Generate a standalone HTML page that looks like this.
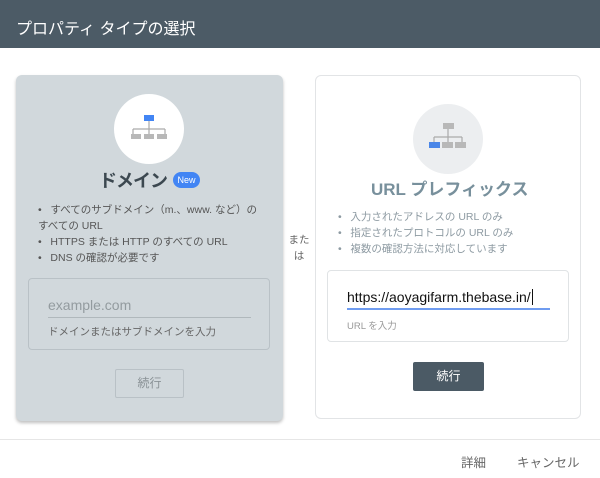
<!DOCTYPE html>
<html><head><meta charset="utf-8"><style>
*{margin:0;padding:0;box-sizing:border-box}
body{width:600px;height:478px;position:relative;background:#fff;font-family:"Liberation Sans","Noto Sans CJK JP",sans-serif;overflow:hidden}
.a{position:absolute;white-space:nowrap}
.hdr{position:absolute;left:0;top:0;width:600px;height:48px;background:#4c5b66;color:#fff;font-size:16px;padding:15px 0 0 16px}
.lc{position:absolute;left:16px;top:75px;width:267px;height:346px;background:#d1d8dc;border-radius:6px;box-shadow:0 2px 3px rgba(0,0,0,.25)}
.rc{position:absolute;left:315px;top:75px;width:266px;height:344px;background:#fff;border:1px solid #e2e4e6;border-radius:6px}
.li{font-size:10.5px;line-height:16px}
</style></head><body>
<div class="hdr">プロパティ タイプの選択</div>
<div class="lc"></div>
<div class="rc"></div>
<div class="a" style="left:114px;top:94px;width:70px;height:70px;border-radius:50%;background:#fff"></div>
<svg class="a" style="left:114px;top:94px" width="70" height="70">
<rect x="30" y="21" width="10" height="6" fill="#4285f4"/>
<path d="M35 27V35M19 35H51M19 35V40M35 35V40M51 35V40" stroke="#aaa" stroke-width="1.2" fill="none"/>
<rect x="17" y="40" width="10" height="5" fill="#b8b8b8"/><rect x="30" y="40" width="10" height="5" fill="#b8b8b8"/><rect x="43" y="40" width="10" height="5" fill="#b8b8b8"/>
</svg>
<div class="a" style="left:99px;top:167px;font-size:18px;letter-spacing:-1px;font-weight:bold;color:#3c4850">ドメイン</div>
<div class="a" style="left:173px;top:172px;width:27px;height:16px;border-radius:8px;background:#4285f4;color:#fff;font-size:9px;text-align:center;line-height:16px">New</div>
<div class="a li" style="left:38px;top:202px;color:#555">•&nbsp;&nbsp;&nbsp;すべてのサブドメイン（m.、www. など）の</div>
<div class="a li" style="left:38px;top:218px;color:#555">すべての URL</div>
<div class="a li" style="left:38px;top:234px;color:#555">•&nbsp;&nbsp;&nbsp;HTTPS または HTTP のすべての URL</div>
<div class="a li" style="left:38px;top:250px;color:#555">•&nbsp;&nbsp;&nbsp;DNS の確認が必要です</div>
<div class="a" style="left:28px;top:278px;width:242px;height:72px;border:1px solid #b9c1c6;border-radius:4px"></div>
<div class="a" style="left:48px;top:297px;font-size:14px;color:#939b9f">example.com</div>
<div class="a" style="left:48px;top:317px;width:203px;height:1px;background:#b0b8bc"></div>
<div class="a" style="left:48px;top:324px;font-size:10.5px;color:#666">ドメインまたはサブドメインを入力</div>
<div class="a" style="left:115px;top:369px;width:69px;height:29px;border:1px solid #b9c1c6;border-radius:2px;font-size:12px;color:#8a9296;text-align:center;line-height:27px">続行</div>
<div class="a" style="left:288px;top:232px;font-size:10.5px;color:#666;line-height:16px;width:22px;text-align:center;white-space:normal">また<br>は</div>
<div class="a" style="left:413px;top:104px;width:70px;height:70px;border-radius:50%;background:#eceef0"></div>
<svg class="a" style="left:413px;top:104px" width="70" height="70">
<rect x="30" y="19" width="11" height="6" fill="#b8b8b8"/>
<path d="M35 25V33M21 33H49M21 33V38M35 33V38M49 33V38" stroke="#aaa" stroke-width="1.2" fill="none"/>
<rect x="16" y="38" width="11" height="6" fill="#4a86e8"/><rect x="29" y="38" width="11" height="6" fill="#b8b8b8"/><rect x="42" y="38" width="11" height="6" fill="#b8b8b8"/>
</svg>
<div class="a" style="left:371px;top:175px;font-size:17px;font-weight:bold;color:#78909c">URL プレフィックス</div>
<div class="a li" style="left:338px;top:209px;color:#8d9aa2">•&nbsp;&nbsp;&nbsp;入力されたアドレスの URL のみ</div>
<div class="a li" style="left:338px;top:225px;color:#8d9aa2">•&nbsp;&nbsp;&nbsp;指定されたプロトコルの URL のみ</div>
<div class="a li" style="left:338px;top:241px;color:#8d9aa2">•&nbsp;&nbsp;&nbsp;複数の確認方法に対応しています</div>
<div class="a" style="left:327px;top:270px;width:242px;height:72px;border:1px solid #e0e3e5;border-radius:4px"></div>
<div class="a" style="left:347px;top:289px;font-size:14px;color:#111">https://aoyagifarm.thebase.in/<span style="border-left:1px solid #111;margin-left:1px"></span></div>
<div class="a" style="left:347px;top:308px;width:203px;height:2px;background:#6f9cf0"></div>
<div class="a" style="left:347px;top:318px;font-size:9.5px;color:#999">URL を入力</div>
<div class="a" style="left:413px;top:362px;width:71px;height:29px;background:#4b5a65;border-radius:2px;font-size:12px;color:#fff;text-align:center;line-height:29px">続行</div>
<div class="a" style="left:0;top:439px;width:600px;height:1px;background:#e6e6e6"></div>
<div class="a" style="left:461px;top:452px;font-size:12.5px;color:#666">詳細</div>
<div class="a" style="left:517px;top:452px;font-size:12.5px;color:#666">キャンセル</div>
</body></html>
